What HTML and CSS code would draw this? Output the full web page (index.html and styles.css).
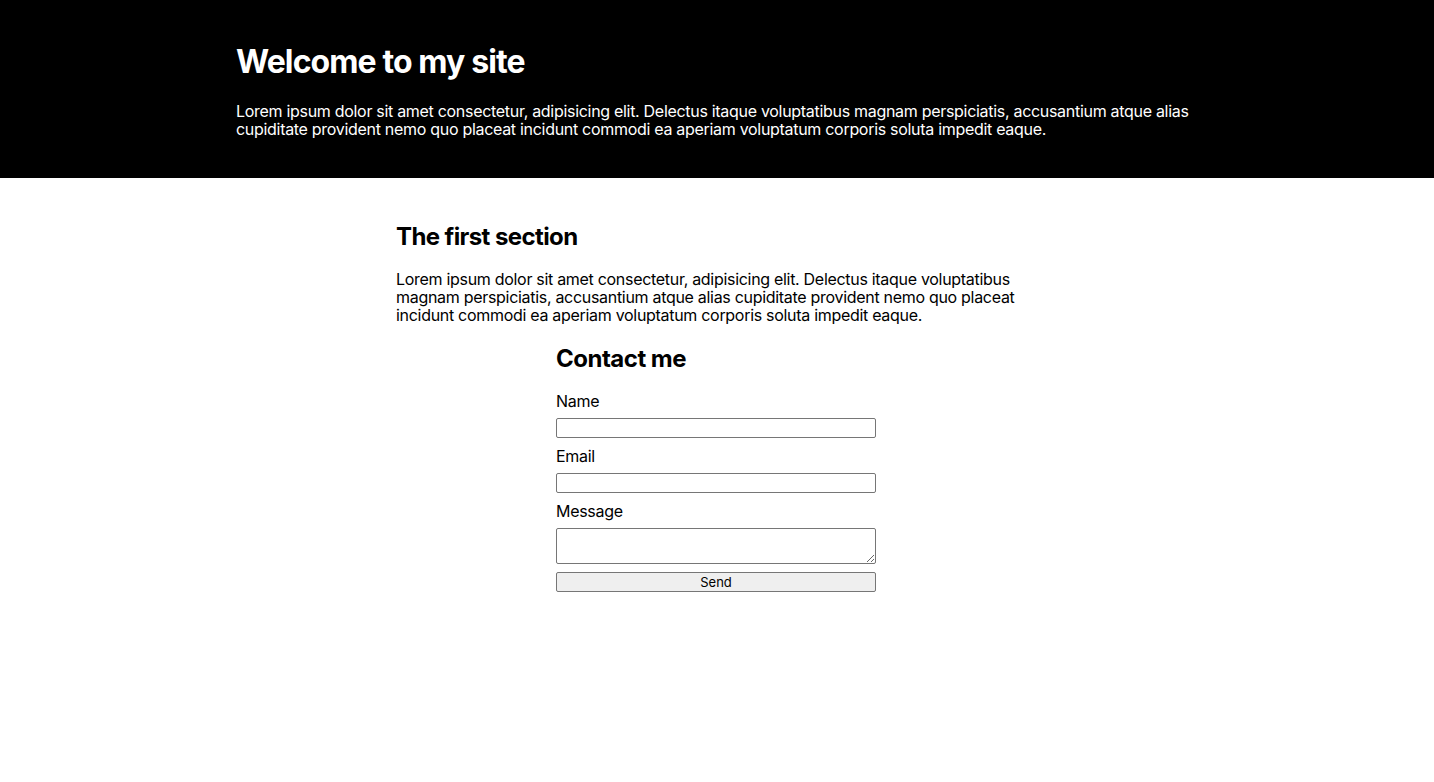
FILE: index.html
```html
<!DOCTYPE html>
<html lang="en">
<head>
<meta charset="utf-8">
<title>Welcome to my site</title>
<link rel="stylesheet" href="styles.css">
</head>
<body>
<header class="hero">
  <div class="hero-inner">
    <h1 class="hero-title">Welcome to my site</h1>
    <p class="hero-text">Lorem ipsum dolor sit amet consectetur, adipisicing elit. Delectus itaque voluptatibus magnam perspiciatis, accusantium atque alias cupiditate provident nemo quo placeat incidunt commodi ea aperiam voluptatum corporis soluta impedit eaque.</p>
  </div>
</header>
<main class="content">
  <section class="intro">
    <h2 class="section-title">The first section</h2>
    <p class="section-text">Lorem ipsum dolor sit amet consectetur, adipisicing elit. Delectus itaque voluptatibus magnam perspiciatis, accusantium atque alias cupiditate provident nemo quo placeat incidunt commodi ea aperiam voluptatum corporis soluta impedit eaque.</p>
  </section>
  <section class="contact">
    <h2 class="section-title contact-title">Contact me</h2>
    <form class="contact-form">
      <label class="field-label" for="name">Name</label>
      <input class="field-input" id="name" type="text">
      <label class="field-label" for="email">Email</label>
      <input class="field-input" id="email" type="email">
      <label class="field-label" for="message">Message</label>
      <textarea class="field-area" id="message"></textarea>
      <button class="send-btn" type="button">Send</button>
    </form>
  </section>
</main>
</body>
</html>
```

FILE: styles.css
```css
html, body {
  margin: 0;
  padding: 0;
  background: #fff;
}

body {
  font-family: Inter, "Liberation Sans", Arial, sans-serif;
  font-size: 16px;
  line-height: 1.125;
  letter-spacing: -0.3px;
  color: #000;
}

.hero {
  background: #000;
  color: #fff;
  padding: 24px 2px 24px 0;
}

.hero-inner {
  max-width: 960px;
  margin: 0 auto;
}

.hero-title {
  font-size: 32px;
  font-weight: 700;
  line-height: 1.1;
  margin: 20px 0 23px;
  letter-spacing: -0.9px;
}

.hero-text {
  margin: 0 0 16px;
}

.content {
  padding: 26px 2px 24px 0;
}

.intro {
  max-width: 640px;
  margin: 0 auto;
}

.section-title {
  font-size: 24px;
  font-weight: 700;
  line-height: 1.1;
  margin: 20px 0 19px;
  letter-spacing: -0.6px;
}

.contact-title {
  margin-top: 22px;
  letter-spacing: -0.5px;
}

.section-text {
  margin: 0 0 16px;
}

.contact {
  max-width: 320px;
  margin: 0 auto;
}

.contact-form {
  display: flex;
  flex-direction: column;
  gap: 8px;
}

.field-label {
  display: block;
  line-height: 18px;
  margin-top: 1px;
}

.field-input,
.field-area,
.send-btn {
  box-sizing: border-box;
  width: 320px;
  margin: 0;
  border: 1px solid #767676;
  border-radius: 2px;
  background: #fff;
  font-family: Inter, "Liberation Sans", Arial, sans-serif;
  font-size: 13px;
  letter-spacing: 0;
}

.field-input {
  height: 20px;
  padding: 1px 2px;
}

.field-area {
  height: 36px;
  padding: 2px;
  resize: vertical;
}

.send-btn {
  height: 20px;
  background: #efefef;
  color: #000;
  padding: 0 6px;
}
```
